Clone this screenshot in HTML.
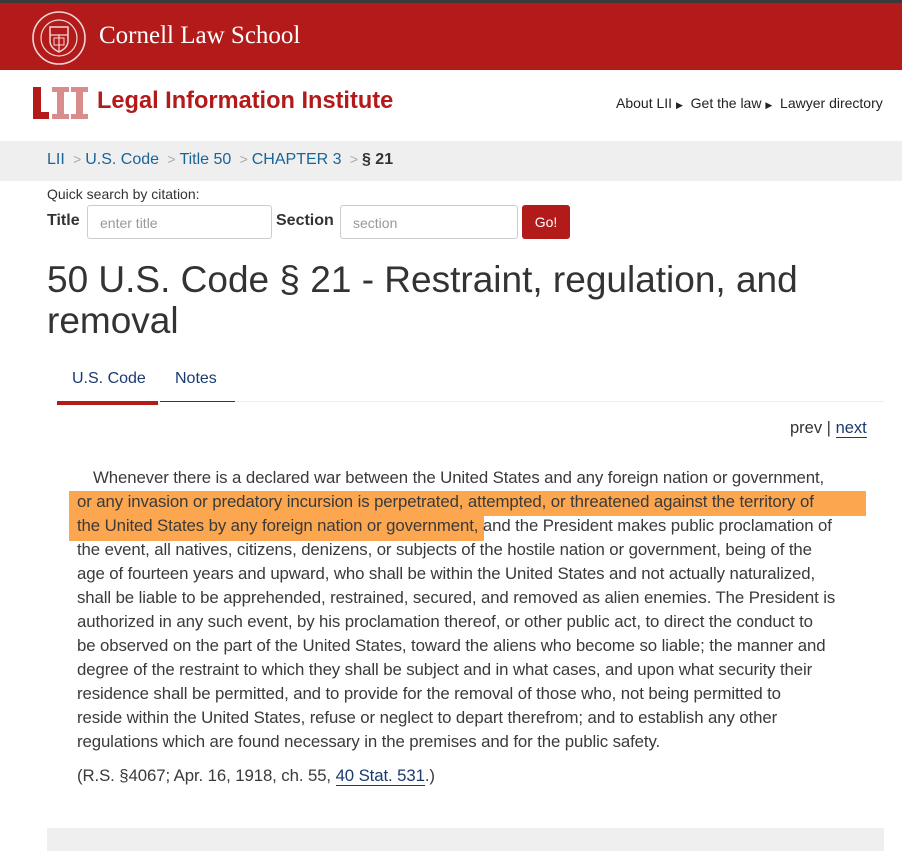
<!DOCTYPE html>
<html><head><meta charset="utf-8"><style>
*{margin:0;padding:0;box-sizing:border-box}
body{width:902px;height:851px;overflow:hidden;background:#fff;font-family:"Liberation Sans",sans-serif;color:#333;position:relative}
.a{position:absolute;white-space:nowrap}
.top{left:0;top:0;width:902px;height:3px;background:#3a3a3a}
.red{left:0;top:3px;width:902px;height:67px;background:#b31b1b}
.crumb{left:0;top:141px;width:902px;height:40px;background:#efefef}
.bc{font-size:16px;color:#1a6496}
.sep{color:#aaa;font-size:14px}
.inp{border:1px solid #ccc;border-radius:3px;height:34px;background:#fff;color:#999;font-size:14px;padding:9px 12px}
.line{font-size:16.8px;color:#3a3a3a;left:77px;letter-spacing:-0.1px}
.hl{position:absolute;background:#fca64f}
.pk{position:absolute;background:#d98c8c}
</style></head><body>
<div class="a top"></div>
<div class="a red"></div>
<svg class="a" style="left:31px;top:10px" width="56" height="56" viewBox="0 0 56 56">
<circle cx="28" cy="28" r="26" fill="none" stroke="#f3d6d6" stroke-width="1.6"/>
<circle cx="28" cy="28" r="18" fill="none" stroke="#f3d6d6" stroke-width="1.2"/>
<path d="M19 17h18v14c0 6-5 9-9 11-4-2-9-5-9-11z" fill="none" stroke="#f3d6d6" stroke-width="1.5"/>
<path d="M19 25h18M28 25v16" stroke="#f3d6d6" stroke-width="1.2"/>
<rect x="23" y="28" width="10" height="7" fill="none" stroke="#f3d6d6"/>
</svg>
<div class="a" style="left:99px;top:22px;font-family:'Liberation Serif',serif;font-size:25px;color:#fff">Cornell Law School</div>
<div class="a" style="left:33px;top:87px;width:8px;height:32px;background:#b31b1b"></div>
<div class="a" style="left:33px;top:112px;width:16px;height:7px;background:#b31b1b"></div>
<div class="pk" style="left:52px;top:87px;width:17px;height:5px"></div>
<div class="pk" style="left:57px;top:87px;width:7px;height:32px"></div>
<div class="pk" style="left:52px;top:114px;width:17px;height:5px"></div>
<div class="pk" style="left:71px;top:87px;width:17px;height:5px"></div>
<div class="pk" style="left:76px;top:87px;width:7px;height:32px"></div>
<div class="pk" style="left:71px;top:114px;width:17px;height:5px"></div>
<div class="a" style="left:97px;top:88px;font-size:23.6px;font-weight:bold;color:#b31b1b">Legal Information Institute</div>
<div class="a" style="left:616px;top:95px;font-size:14px;color:#222">About LII <span style="font-size:9px">▶</span> &nbsp;Get the law <span style="font-size:9px">▶</span> &nbsp;Lawyer directory</div>
<div class="a crumb"></div>
<div class="a bc" style="left:47px;top:151px">LII <span class="sep">&nbsp;&gt;&nbsp;</span>U.S. Code <span class="sep">&nbsp;&gt;&nbsp;</span>Title 50 <span class="sep">&nbsp;&gt;&nbsp;</span>CHAPTER 3 <span class="sep">&nbsp;&gt;&nbsp;</span><b style="color:#333">§ 21</b></div>
<div class="a" style="left:47px;top:186px;font-size:14px;color:#333">Quick search by citation:</div>
<div class="a" style="left:47px;top:212px;font-size:16px;font-weight:bold;color:#333">Title</div>
<div class="a inp" style="left:87px;top:205px;width:185px">enter title</div>
<div class="a" style="left:276px;top:212px;font-size:16px;font-weight:bold;color:#333">Section</div>
<div class="a inp" style="left:340px;top:205px;width:178px">section</div>
<div class="a" style="left:522px;top:205px;width:48px;height:34px;background:#b31b1b;border-radius:3px;color:#fff;font-size:14px;text-align:center;line-height:34px">Go!</div>
<div class="a" style="left:47px;top:259px;font-size:37px;color:#333;line-height:41px;white-space:normal;width:830px">50 U.S. Code § 21 - Restraint, regulation, and removal</div>
<div class="a" style="left:72px;top:370px;font-size:16px;color:#1a3a6e">U.S. Code</div>
<div class="a" style="left:175px;top:370px;font-size:16px;color:#1a3a6e">Notes</div>
<div class="a" style="left:57px;top:401px;width:827px;height:1px;background:#eee"></div>
<div class="a" style="left:57px;top:401px;width:101px;height:4px;background:#b31b1b"></div>
<div class="a" style="left:160px;top:401px;width:75px;height:1px;background:#1a3a6e"></div>
<div class="a" style="left:790px;top:419px;font-size:16.5px;color:#333">prev | <span style="color:#1a3a6e;border-bottom:1px solid #1a3a6e">next</span></div>
<div class="hl" style="left:69px;top:491px;width:797px;height:25px"></div>
<div class="hl" style="left:69px;top:516px;width:415px;height:25px"></div>
<div class="a line" style="left:93px;top:468px">Whenever there is a declared war between the United States and any foreign nation or government,</div>
<div class="a line" style="top:492px">or any invasion or predatory incursion is perpetrated, attempted, or threatened against the territory of</div>
<div class="a line" style="top:516px">the United States by any foreign nation or government, and the President makes public proclamation of</div>
<div class="a line" style="top:540px">the event, all natives, citizens, denizens, or subjects of the hostile nation or government, being of the</div>
<div class="a line" style="top:564px">age of fourteen years and upward, who shall be within the United States and not actually naturalized,</div>
<div class="a line" style="top:588px">shall be liable to be apprehended, restrained, secured, and removed as alien enemies. The President is</div>
<div class="a line" style="top:612px">authorized in any such event, by his proclamation thereof, or other public act, to direct the conduct to</div>
<div class="a line" style="top:636px">be observed on the part of the United States, toward the aliens who become so liable; the manner and</div>
<div class="a line" style="top:660px">degree of the restraint to which they shall be subject and in what cases, and upon what security their</div>
<div class="a line" style="top:684px">residence shall be permitted, and to provide for the removal of those who, not being permitted to</div>
<div class="a line" style="top:708px">reside within the United States, refuse or neglect to depart therefrom; and to establish any other</div>
<div class="a line" style="top:732px">regulations which are found necessary in the premises and for the public safety.</div>
<div class="a line" style="top:766px">(R.S. §4067; Apr. 16, 1918, ch. 55, <span style="color:#1a3a6e;border-bottom:1px solid #1a3a6e">40 Stat. 531</span>.)</div>
<div class="a" style="left:47px;top:828px;width:837px;height:23px;background:#efefef"></div>
</body></html>
